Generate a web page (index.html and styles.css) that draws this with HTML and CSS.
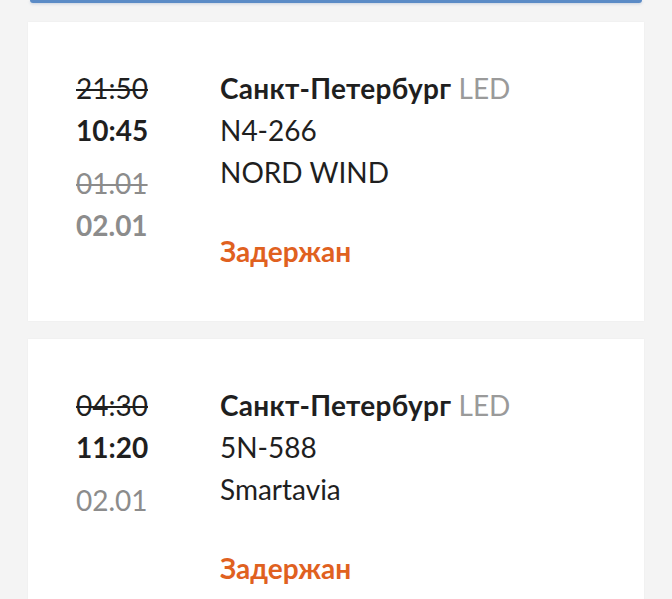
FILE: index.html
```html
<!DOCTYPE html>
<html lang="ru">
<head>
<meta charset="utf-8">
<link rel="stylesheet" href="styles.css">
</head>
<body>
<div class="topbar"></div>
<div class="list">
  <div class="card">
    <div class="times">
      <div class="line old">21:50</div>
      <div class="line now">10:45</div>
      <div class="dates">
        <div class="line date-old">01.01</div>
        <div class="line date-new bold">02.01</div>
      </div>
    </div>
    <div class="info">
      <div class="line city">Санкт-Петербург <span class="code">LED</span></div>
      <div class="line">N4-266</div>
      <div class="line">NORD WIND</div>
      <div class="line status">Задержан</div>
    </div>
  </div>
  <div class="card">
    <div class="times">
      <div class="line old">04:30</div>
      <div class="line now">11:20</div>
      <div class="dates">
        <div class="line date-new">02.01</div>
      </div>
    </div>
    <div class="info">
      <div class="line city">Санкт-Петербург <span class="code">LED</span></div>
      <div class="line">5N-588</div>
      <div class="line">Smartavia</div>
      <div class="line status">Задержан</div>
    </div>
  </div>
</div>
</body>
</html>
```
FILE: styles.css
```css
html, body {
  margin: 0;
  padding: 0;
  background: #f4f4f4;
  font-family: Lato, "Open Sans", "Noto Sans", sans-serif;
  color: #1f1f1f;
}
.topbar {
  height: 3px;
  margin: 0 30px;
  background: #5b8bc6;
  border-radius: 0 0 6px 6px;
  box-shadow: 0 1px 3px rgba(60, 100, 160, 0.25);
}
.list {
  display: flex;
  flex-direction: column;
  gap: 18px;
  margin: 19px 28px 0;
}
.card {
  background: #fff;
  display: flex;
  padding: 45px 48px 49px;
  box-shadow: 0 0 2px rgba(0,0,0,0.04);
}
.line {
  font-size: 28px;
  line-height: 42px;
  white-space: nowrap;
}
.times {
  width: 144px;
  flex: none;
}
.old {
  text-decoration: line-through;
  text-decoration-thickness: 2px;
}
.now {
  font-weight: 700;
}
.dates {
  margin-top: 11px;
  color: #8c8c8c;
}
.date-old {
  text-decoration: line-through;
  text-decoration-thickness: 2px;
}
.bold {
  font-weight: 700;
}
.city {
  font-weight: 700;
  letter-spacing: 0.3px;
}
.code {
  font-weight: 400;
  color: #9a9a9a;
  letter-spacing: 0;
}
.status {
  margin-top: 37px;
  color: #e0611f;
  font-weight: 700;
}
```
